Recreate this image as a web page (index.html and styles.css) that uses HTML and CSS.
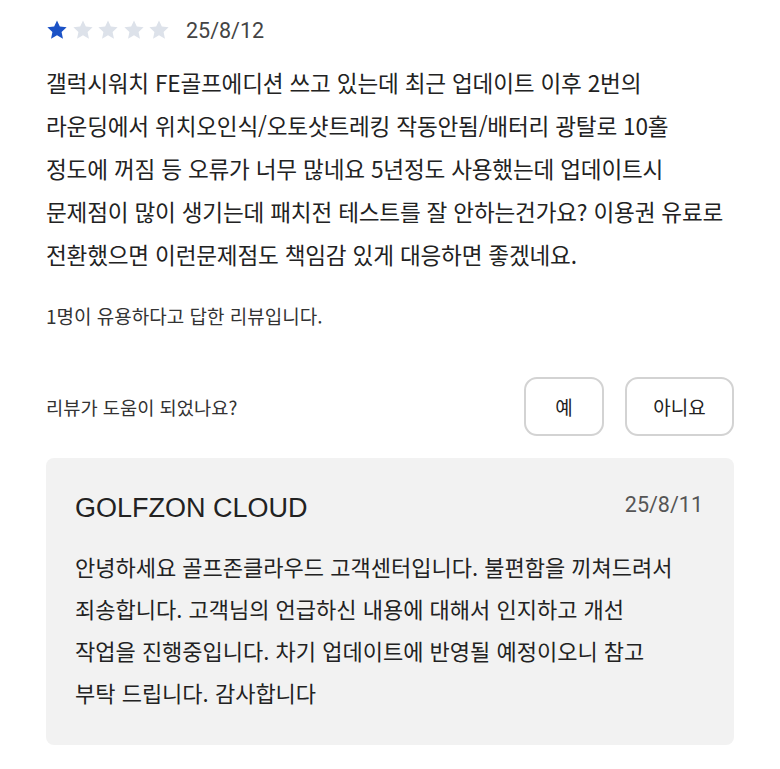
FILE: index.html
```html
<!DOCTYPE html>
<html lang="ko">
<head>
  <meta charset="UTF-8">
  <meta name="viewport" content="width=device-width, initial-scale=1.0">
  <title>리뷰</title>
  <link rel="stylesheet" href="styles.css">
</head>
<body>
  <div class="review">
    <div class="review-head">
      <div class="stars">
        <svg class="star star-on" viewBox="0 0 24 24"><polygon points="12,1.5 15.1,8.2 22.5,9 17,14.1 18.5,21.5 12,17.8 5.5,21.5 7,14.1 1.5,9 8.9,8.2"/></svg>
        <svg class="star" viewBox="0 0 24 24"><polygon points="12,1.5 15.1,8.2 22.5,9 17,14.1 18.5,21.5 12,17.8 5.5,21.5 7,14.1 1.5,9 8.9,8.2"/></svg>
        <svg class="star" viewBox="0 0 24 24"><polygon points="12,1.5 15.1,8.2 22.5,9 17,14.1 18.5,21.5 12,17.8 5.5,21.5 7,14.1 1.5,9 8.9,8.2"/></svg>
        <svg class="star" viewBox="0 0 24 24"><polygon points="12,1.5 15.1,8.2 22.5,9 17,14.1 18.5,21.5 12,17.8 5.5,21.5 7,14.1 1.5,9 8.9,8.2"/></svg>
        <svg class="star" viewBox="0 0 24 24"><polygon points="12,1.5 15.1,8.2 22.5,9 17,14.1 18.5,21.5 12,17.8 5.5,21.5 7,14.1 1.5,9 8.9,8.2"/></svg>
      </div>
      <span class="review-date">25/8/12</span>
    </div>

    <p class="review-text">갤럭시워치 FE골프에디션 쓰고 있는데 최근 업데이트 이후 2번의<br>
      라운딩에서 위치오인식/오토샷트레킹 작동안됨/배터리 광탈로 10홀<br>
      정도에 꺼짐 등 오류가 너무 많네요 5년정도 사용했는데 업데이트시<br>
      문제점이 많이 생기는데 패치전 테스트를 잘 안하는건가요? 이용권 유료로<br>
      전환했으면 이런문제점도 책임감 있게 대응하면 좋겠네요.</p>

    <p class="helpful-count">1명이 유용하다고 답한 리뷰입니다.</p>

    <div class="feedback">
      <span class="feedback-label">리뷰가 도움이 되었나요?</span>
      <div class="feedback-buttons">
        <button type="button" class="button button-yes">예</button>
        <button type="button" class="button button-no">아니요</button>
      </div>
    </div>

    <!-- 개발자 답변 -->
    <div class="reply">
      <div class="reply-head">
        <span class="reply-author">GOLFZON CLOUD</span>
        <span class="reply-date">25/8/11</span>
      </div>
      <p class="reply-text">안녕하세요 골프존클라우드 고객센터입니다. 불편함을 끼쳐드려서 죄송합니다. 고객님의 언급하신 내용에 대해서 인지하고 개선 작업을 진행중입니다. 차기 업데이트에 반영될 예정이오니 참고 부탁 드립니다. 감사합니다</p>
    </div>
  </div>
</body>
</html>
```

FILE: styles.css
```css
body {
  margin: 0;
  background-color: #fff;
  font-family: "Noto Sans CJK KR", "Noto Sans", sans-serif;
  color: #222;
}

.review {
  padding: 16px 46px 0 46px;
}

.review-head {
  display: flex;
  align-items: center;
  height: 28px;
}

.stars {
  display: flex;
  gap: 3.5px;
}

.star {
  width: 22px;
  height: 22px;
  fill: #dde2ea;
}

.star-on {
  fill: #1b52c6;
}

.review-date {
  margin-left: 16px;
  font-family: Roboto, "Liberation Sans", sans-serif;
  font-size: 21.5px;
  color: #444;
}

.review-text {
  margin: 16.5px 0 0 0;
  font-size: 22.6px;
  letter-spacing: -0.2px;
  line-height: 43px;
  white-space: nowrap;
  color: #222;
}

.helpful-count {
  margin: 26.5px 0 0 0;
  font-size: 19px;
  line-height: 28px;
  color: #333;
}

.feedback {
  display: flex;
  align-items: center;
  justify-content: space-between;
  margin-top: 47px;
}

.feedback-label {
  font-size: 18.7px;
  color: #333;
}

.feedback-buttons {
  display: flex;
  gap: 21px;
}

.button {
  height: 59px;
  background-color: #fff;
  border: 2px solid #d3d3d3;
  border-radius: 13px;
  font-family: "Noto Sans CJK KR", sans-serif;
  font-size: 19px;
  color: #222;
  cursor: pointer;
}

.button-yes {
  width: 80px;
}

.button-no {
  width: 109px;
}

.reply {
  margin-top: 22px;
  background-color: #f2f2f2;
  border-radius: 8px;
  padding: 34px 31px 32px 29px;
}

.reply-head {
  display: flex;
  justify-content: space-between;
  align-items: center;
  height: 32px;
}

.reply-author {
  font-family: "Liberation Sans", Arial, sans-serif;
  font-size: 27px;
  color: #222;
}

.reply-date {
  font-family: Roboto, "Liberation Sans", sans-serif;
  font-size: 21.5px;
  color: #555;
  margin-top: -8px;
}

.reply-text {
  margin: 21px 23px 0 0;
  font-size: 22px;
  line-height: 42px;
  word-break: keep-all;
  color: #222;
}
```
